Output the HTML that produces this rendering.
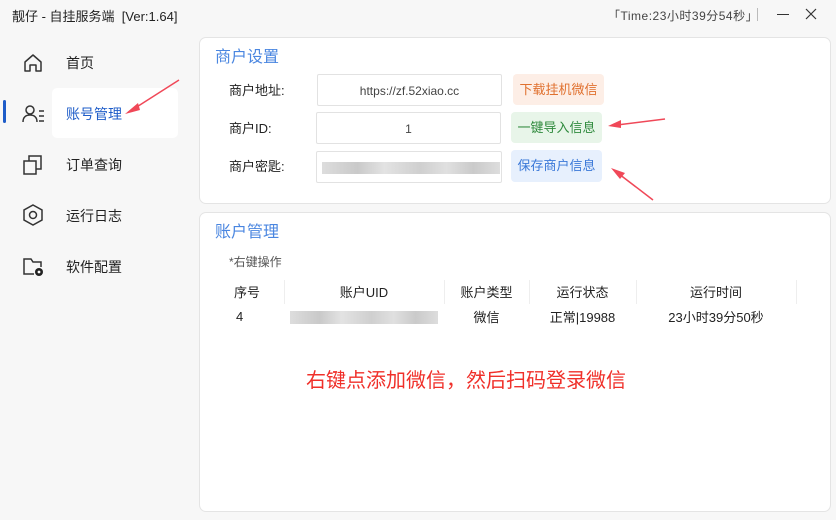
<!DOCTYPE html>
<html><head><meta charset="utf-8"><style>
*{margin:0;padding:0;box-sizing:border-box}
body{width:836px;height:520px;background:#f7f7f7;font-family:"Liberation Sans","Noto Sans CJK SC",sans-serif;position:relative;overflow:hidden;color:#222}
.a{position:absolute}
.t{font-size:13px;white-space:nowrap}
.card{position:absolute;background:#fff;border:1px solid #e4e4e4;border-radius:7px}
.nav{position:absolute;left:66px;font-size:14px;color:#222}
.ic{position:absolute;left:22px}
.inp{position:absolute;background:#fff;border:1px solid #e2e2e2;border-radius:2px;font-size:12px;color:#444;text-align:center;line-height:30px}
.btn{position:absolute;border-radius:4px;font-size:13px;text-align:center;line-height:31px}
.lbl{position:absolute;left:229px;font-size:13px;color:#222}
.th{position:absolute;top:282px;font-size:13px;color:#222;text-align:center}
.sep{position:absolute;top:280px;width:1px;height:24px;background:#eee}
.td{position:absolute;top:307px;font-size:13px;color:#222;text-align:center}
.blur{position:absolute;background:linear-gradient(90deg,#ddd,#c9c9c9 20%,#e3e3e3 35%,#cfcfcf 55%,#e0e0e0 70%,#cacaca 85%,#ddd)}
</style></head><body>
<div class="a t" style="left:12px;top:6px;font-size:13px;color:#222">靓仔 - 自挂服务端&nbsp;&nbsp;[Ver:1.64]</div>
<div class="a t" style="left:608px;top:7px;font-size:12px;letter-spacing:0.5px;color:#444">「Time:23小时39分54秒」</div>
<div class="a" style="left:757px;top:8px;width:1px;height:13px;background:#bbb"></div>
<div class="a" style="left:777px;top:14px;width:12px;height:1px;background:#333"></div>
<svg class="a" style="left:805px;top:8px" width="12" height="12"><path d="M1 1L11 11M11 1L1 11" stroke="#333" stroke-width="1.2"/></svg>

<div class="a" style="left:52px;top:88px;width:126px;height:50px;background:#fff;border-radius:5px"></div>
<div class="a" style="left:3px;top:100px;width:3px;height:23px;background:#1e5cc8;border-radius:2px"></div>
<svg class="ic" style="top:52px" width="22" height="22" viewBox="0 0 22 22"><path d="M3 10L11 3L19 10V19H14V13H8V19H3Z" fill="none" stroke="#333" stroke-width="1.5" stroke-linejoin="round"/></svg>
<div class="nav" style="top:53px">首页</div>
<svg class="ic" style="top:103px" width="24" height="22" viewBox="0 0 24 22"><circle cx="8" cy="7" r="4" fill="none" stroke="#333" stroke-width="1.5"/><path d="M1 19C1 14 4 12 8 12C12 12 15 14 15 19" fill="none" stroke="#333" stroke-width="1.5"/><path d="M17 8H22M17 13H22M17 18H22" stroke="#333" stroke-width="1.5"/></svg>
<div class="nav" style="top:104px;color:#1e5cc8">账号管理</div>
<svg class="ic" style="top:154px" width="22" height="22" viewBox="0 0 22 22"><rect x="2" y="7" width="12" height="13" fill="none" stroke="#333" stroke-width="1.5"/><path d="M7 7V2H19V15H14" fill="none" stroke="#333" stroke-width="1.5"/></svg>
<div class="nav" style="top:155px">订单查询</div>
<svg class="ic" style="top:204px" width="22" height="22" viewBox="0 0 22 22"><path d="M11 1L20 6V16L11 21L2 16V6Z" fill="none" stroke="#333" stroke-width="1.5"/><circle cx="11" cy="11" r="3.5" fill="none" stroke="#333" stroke-width="1.5"/></svg>
<div class="nav" style="top:206px">运行日志</div>
<svg class="ic" style="top:256px" width="24" height="22" viewBox="0 0 24 22"><path d="M12 18H2V3H9L11 6H19V11" fill="none" stroke="#333" stroke-width="1.5"/><circle cx="17" cy="16" r="4" fill="#222"/><circle cx="17" cy="16" r="1.4" fill="#fff"/></svg>
<div class="nav" style="top:257px">软件配置</div>
<svg class="a" style="left:120px;top:78px" width="62" height="40"><path d="M59 2L12 32" stroke="#f04858" stroke-width="1.5"/><path d="M5 36L18 25L20 32Z" fill="#f04858"/></svg>

<div class="card" style="left:199px;top:37px;width:632px;height:167px"></div>
<div class="a" style="left:215px;top:43px;font-size:16px;color:#4a86e0">商户设置</div>
<div class="lbl" style="top:80px">商户地址:</div>
<div class="lbl" style="top:118px">商户ID:</div>
<div class="lbl" style="top:156px">商户密匙:</div>
<div class="inp" style="left:317px;top:74px;width:185px;height:32px;line-height:32px">https://zf.52xiao.cc</div>
<div class="inp" style="left:316px;top:112px;width:185px;height:32px;line-height:32px">1</div>
<div class="inp" style="left:316px;top:151px;width:186px;height:32px"></div>
<div class="blur" style="left:322px;top:162px;width:178px;height:12px"></div>
<div class="btn" style="left:513px;top:74px;width:91px;height:31px;background:#fdeee6;color:#e0702e">下载挂机微信</div>
<div class="btn" style="left:511px;top:112px;width:91px;height:31px;background:#e8f5e9;color:#2f8a3d">一键导入信息</div>
<div class="btn" style="left:511px;top:150px;width:91px;height:32px;background:#e7f0fd;color:#3a78d8">保存商户信息</div>
<svg class="a" style="left:605px;top:116px" width="62" height="14"><path d="M60 3L12 9" stroke="#f04858" stroke-width="1.5"/><path d="M3 10L16 4L16 12Z" fill="#f04858"/></svg>
<svg class="a" style="left:607px;top:164px" width="48" height="38"><path d="M46 36L12 10" stroke="#f04858" stroke-width="1.5"/><path d="M4 4L18 9L13 15Z" fill="#f04858"/></svg>

<div class="card" style="left:199px;top:212px;width:632px;height:300px"></div>
<div class="a" style="left:215px;top:218px;font-size:16px;color:#4a86e0">账户管理</div>
<div class="a" style="left:229px;top:253px;font-size:12px;color:#555">*右键操作</div>
<div class="th" style="left:222px;width:50px">序号</div>
<div class="sep" style="left:284px"></div>
<div class="th" style="left:284px;width:160px">账户UID</div>
<div class="sep" style="left:444px"></div>
<div class="th" style="left:444px;width:85px">账户类型</div>
<div class="sep" style="left:529px"></div>
<div class="th" style="left:529px;width:107px">运行状态</div>
<div class="sep" style="left:636px"></div>
<div class="th" style="left:636px;width:160px">运行时间</div>
<div class="sep" style="left:796px"></div>
<div class="td" style="left:236px;top:309px">4</div>
<div class="blur" style="left:290px;top:311px;width:148px;height:13px"></div>
<div class="td" style="left:444px;width:85px">微信</div>
<div class="td" style="left:529px;width:107px">正常|19988</div>
<div class="td" style="left:636px;width:160px">23小时39分50秒</div>
<div class="a" style="left:306px;top:364px;font-size:20px;color:#f0302a;white-space:nowrap">右键点添加微信，然后扫码登录微信</div>
</body></html>
